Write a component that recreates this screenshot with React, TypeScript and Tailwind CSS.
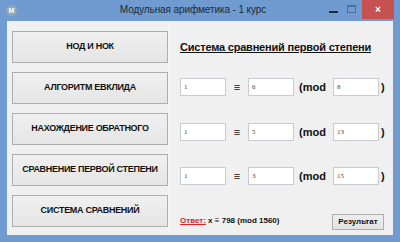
import React from "react";

const menu = [
  "НОД И НОК",
  "АЛГОРИТМ ЕВКЛИДА",
  "НАХОЖДЕНИЕ ОБРАТНОГО",
  "СРАВНЕНИЕ ПЕРВОЙ СТЕПЕНИ",
  "СИСТЕМА СРАВНЕНИЙ",
];

const rows = [
  { a: "1", b: "6", m: "8", mt: "mt-[24px]" },
  { a: "1", b: "5", m: "13", mt: "mt-[27px]" },
  { a: "1", b: "3", m: "15", mt: "mt-[26px]" },
];

function Field({ value }: { value: string }) {
  return (
    <div className="w-[46px] h-[18px] bg-white border border-[#c9cbd0] flex items-center pl-[3px] text-[7px] text-[#444] font-['Liberation_Serif',serif]">
      {value}
    </div>
  );
}

export default function App() {
  return (
    <div className="w-[400px] h-[242px] bg-[#6f9bd0] flex flex-col font-['Liberation_Sans',sans-serif]">
      {/* title bar */}
      <div className="h-[21px] flex items-start relative">
        <div className="ml-[6px] mt-[5px] w-[11px] h-[11px] rounded-full bg-[#8faab3] flex items-center justify-center text-[7px] font-bold text-white leading-none">
          M
        </div>
        <div className="flex-1 pl-[40px] text-center text-[10px] leading-[20px] text-[#1e2a36] tracking-[-0.1px]">
          Модульная арифметика - 1 курс
        </div>
        <div className="flex items-start">
          <div className="w-[9px] h-[2px] bg-[#1e2a36] mt-[11px] mr-[9px]" />
          <div className="w-[9px] h-[8px] border border-[#4d6f96] border-t-2 mt-[5px] mr-[6px]" />
          <div className="w-[32px] h-[19px] bg-[#c75050] flex items-center justify-center text-white text-[10px] font-bold leading-none mr-[6px]">
            ×
          </div>
        </div>
      </div>

      {/* client area */}
      <div className="flex-1 mx-[7px] mb-[7px] bg-[#f0f0f0] flex">
        <div className="w-[162px] pl-[5px] pt-[10px] flex flex-col gap-[9px]">
          {menu.map((label) => (
            <div
              key={label}
              className="w-[156px] h-[32px] bg-gradient-to-b from-[#f0f0f0] to-[#e5e5e5] border border-[#adadad] flex items-center justify-center text-[9px] font-bold text-[#111] tracking-[-0.3px]"
            >
              {label}
            </div>
          ))}
        </div>

        <div className="w-px bg-[#fbfbfb]" />

        <div className="flex-1 pl-[10px] pt-[19px] flex flex-col">
          <div className="text-[11px] leading-[14px] font-bold underline underline-offset-[1px] text-[#111] tracking-[-0.2px] whitespace-nowrap">
            Система сравнений первой степени
          </div>

          {rows.map((r, i) => (
            <div key={i} className={`flex items-center h-[18px] ${r.mt}`}>
              <Field value={r.a} />
              <div className="w-[22px] text-center text-[11px] font-bold text-[#111]">≡</div>
              <Field value={r.b} />
              <div className="w-[39px] pl-[5px] text-[11px] font-bold text-[#111]">(mod</div>
              <Field value={r.m} />
              <div className="pl-[2px] text-[11px] font-bold text-[#111]">)</div>
            </div>
          ))}

          <div className="flex items-start mt-[29px]">
            <div className="mt-[1px] text-[8px] font-bold text-[#111] w-[152px] whitespace-nowrap">
              <span className="text-[#e22424] underline">Ответ:</span> x ≡ 798 (mod 1560)
            </div>
            <div className="w-[52px] h-[16px] bg-gradient-to-b from-[#eeeeee] to-[#e3e3e3] border border-[#adadad] flex items-center justify-center text-[8px] font-bold text-[#111]">
              Результат
            </div>
          </div>
        </div>
      </div>
    </div>
  );
}
